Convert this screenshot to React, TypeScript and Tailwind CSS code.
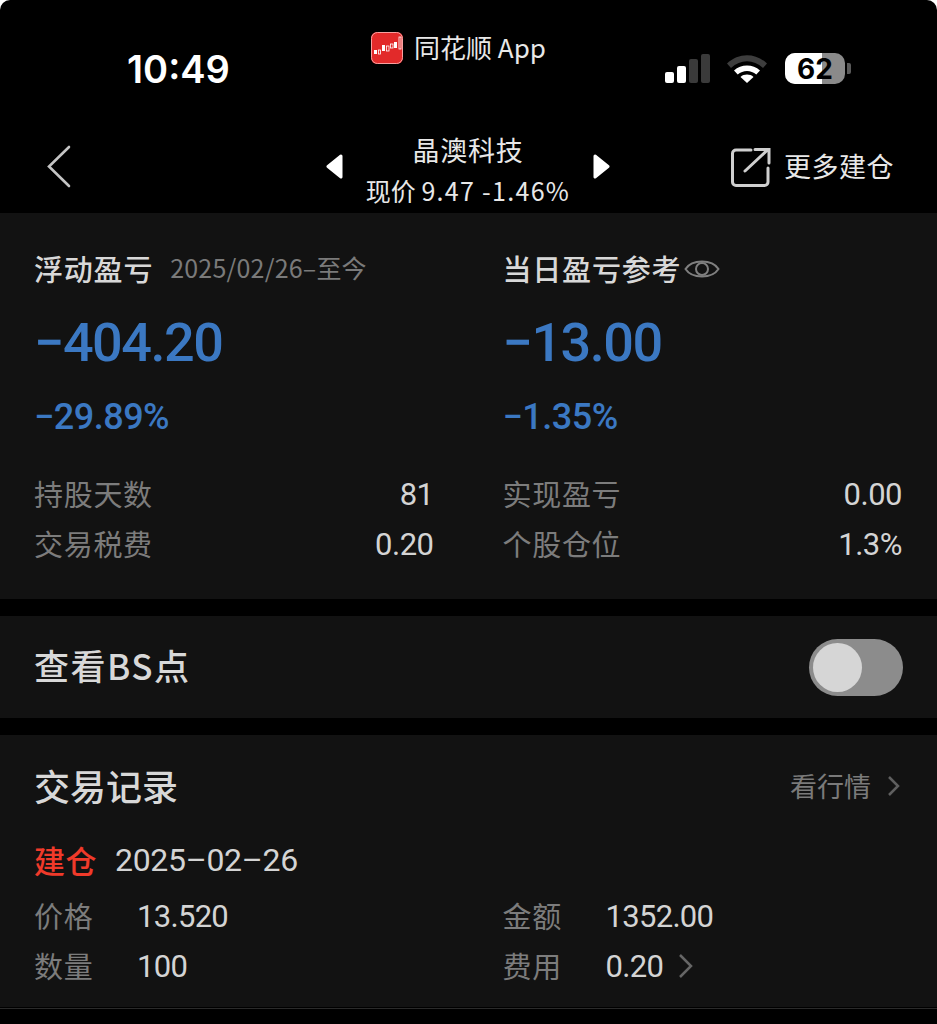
const cjk = "font-['Noto_Sans_CJK_SC',sans-serif]";
const num = "font-['Roboto','Noto_Sans_CJK_SC',sans-serif]";

function AppBadge() {
  return (
    <svg width="32" height="32" viewBox="0 0 32 32">
      <rect width="32" height="32" rx="6" fill="#e22a2a" />
      <rect x="0.5" y="0.5" width="31" height="31" rx="6" fill="none" stroke="#f8a0a0" strokeWidth="1" />
      <g fill="#fff">
        <rect x="3" y="18" width="3" height="4" />
        <rect x="11" y="13" width="3" height="6" />
        <rect x="23" y="10" width="3" height="6" />
      </g>
      <g fill="none" stroke="#fff" strokeWidth="0.8">
        <rect x="7.500" y="18" width="2" height="4" />
        <rect x="15.500" y="14" width="2.500" height="5" />
        <rect x="19.500" y="12" width="2.500" height="4" />
        <rect x="28" y="5" width="2" height="12" />
      </g>
    </svg>
  );
}

function SignalBars() {
  return (
    <div className="flex items-end gap-[3px] h-[30px]">
      <div className="w-[9px] h-[11px] rounded-[2px] bg-white" />
      <div className="w-[9px] h-[17px] rounded-[2px] bg-white" />
      <div className="w-[9px] h-[24px] rounded-[2px] bg-[#3a3a3a]" />
      <div className="w-[9px] h-[29px] rounded-[2px] bg-[#3a3a3a]" />
    </div>
  );
}

function Wifi() {
  return (
    <svg width="42" height="30" viewBox="0 0 42 30">
      <path d="M1 10.5C12.5 -0.5 29.5 -0.5 41 10.5L37 15C27.5 6 14.5 6 5 15Z" fill="#3d3d3d" />
      <path d="M8 17.5C15 10.8 27 10.8 34 17.5L30.3 21.5C25 16.7 17 16.7 11.7 21.5Z" fill="#fff" />
      <path d="M14.5 24C18 20.8 24 20.8 27.5 24L21 30Z" fill="#fff" />
    </svg>
  );
}

function Battery() {
  return (
    <div className="flex items-center gap-[2px]">
      <div className="relative w-[60px] h-[31px] rounded-[10px] bg-[#8a8a8a]">
        <div className="h-full w-[37px] rounded-l-[10px] bg-white" />
        <span className="absolute inset-0 flex items-center justify-center font-['Inter',sans-serif] text-[28px] font-bold leading-none text-black">
          62
        </span>
      </div>
      <div className="w-[4px] h-[11px] rounded-r-[2px] bg-[#5a5a5a]" />
    </div>
  );
}

function ShareIcon() {
  return (
    <svg width="40" height="40" viewBox="0 0 40 40" fill="none" stroke="#cfcfcf" strokeWidth="3" strokeLinecap="round">
      <path d="M20 3H5A3.5 3.5 0 0 0 1.5 6.5V35A3.5 3.5 0 0 0 5 38.500H33.500A3.500 3.500 0 0 0 37 35V21" />
      <path d="M14 24L37 2.500M24 2.500H38V16" />
    </svg>
  );
}

function Arrow({ dir }: { dir: "left" | "right" }) {
  return (
    <svg width="17" height="25" viewBox="0 0 17 25">
      <path
        d={dir === "left" ? "M15 2L2 12.500L15 23Z" : "M2 2L15 12.500L2 23Z"}
        fill="#fff"
        stroke="#fff"
        strokeWidth="3"
        strokeLinejoin="round"
      />
    </svg>
  );
}

function Stat({ label, value }: { label: string; value: string }) {
  return (
    <div className="flex items-center justify-between h-[50px]">
      <span className={`${cjk} text-[29px] tracking-[0.7px] text-[#7c7c7c]`}>{label}</span>
      <span className={`${num} text-[31px] text-[#d4d4d4] tracking-[-0.5px] translate-y-[1px]`}>{value}</span>
    </div>
  );
}

function TradeField({ label, value, more }: { label: string; value: string; more?: boolean }) {
  return (
    <div className="flex items-center h-[50px]">
      <span className={`${cjk} w-[103px] text-[29px] tracking-[0.7px] text-[#7c7c7c]`}>{label}</span>
      <span className={`${num} text-[31px] text-[#d4d4d4] tracking-[-0.7px] translate-y-[1px]`}>{value}</span>
      {more && (
        <svg className="ml-[15px]" width="16" height="26" viewBox="0 0 16 26" fill="none" stroke="#666" strokeWidth="2.5">
          <path d="M2 2L13 13L2 24" />
        </svg>
      )}
    </div>
  );
}

function Summary({
  title,
  note,
  eye,
  amount,
  percent,
  stats,
}: {
  title: string;
  note?: string;
  eye?: boolean;
  amount: string;
  percent: string;
  stats: [string, string][];
}) {
  return (
    <div>
      <div className="flex items-center h-[40px]">
        <span className={`${cjk} text-[29px] font-medium tracking-[0.8px] text-[#d8d8d8]`}>{title}</span>
        {note && <span className={`${cjk} ml-[17px] text-[25px] tracking-[0.2px] text-[#7a7a7a] -translate-y-[1px]`}>{note}</span>}
        {eye && (
          <svg className="ml-[3px]" width="36" height="26" viewBox="0 0 36 26" fill="none" stroke="#7f7f7f" strokeWidth="2">
            <path d="M1.500 13C8 3 28 3 34.500 13C28 23 8 23 1.500 13Z" />
            <circle cx="18" cy="13" r="6" />
          </svg>
        )}
      </div>
      <div className={`${num} mt-[22px] text-[54px] font-medium leading-[64px] tracking-[-1.500px] text-[#3b78c2]`}>
        {amount}
      </div>
      <div className={`${num} mt-[20px] text-[36px] font-medium leading-[44px] tracking-[-0.5px] text-[#3b78c2]`}>
        {percent}
      </div>
      <div className="mt-[30px]">
        {stats.map(([label, value]) => (
          <Stat key={label} label={label} value={value} />
        ))}
      </div>
    </div>
  );
}

export default function App() {
  return (
    <div className="w-[937px] h-[1024px] overflow-hidden bg-white">
      <div className="h-full bg-black rounded-t-[10px] overflow-hidden">
        {/* Status bar */}
        <header className="flex h-[120px] text-white">
          <div className="w-[358px] pl-[127px] pt-[42px] font-['Inter',sans-serif] text-[38px] font-semibold leading-[54px]">
            10:49
          </div>
          <div className="flex items-start gap-[11px] pt-[32px] pl-[13px] w-[307px]">
            <AppBadge />
            <span className={`${cjk} text-[26px] leading-[30px] text-[#e8e8e8]`}>同花顺 App</span>
          </div>
          <div className="flex items-start pt-[53px]">
            <SignalBars />
            <div className="ml-[16px]">
              <Wifi />
            </div>
            <div className="ml-[17px]">
              <Battery />
            </div>
          </div>
        </header>

        {/* Navigation */}
        <nav className="flex items-center h-[93px] text-white">
          <svg className="ml-[47px]" width="25" height="43" viewBox="0 0 25 43" fill="none" stroke="#c4c4c4" strokeWidth="2.600" strokeLinecap="round">
            <path d="M22 2L2 21.500L22 41" />
          </svg>
          <div className="ml-[254px] flex items-center">
            <Arrow dir="left" />
            <div className="w-[250px] text-center">
              <div className={`${cjk} text-[27px] leading-[46px] tracking-[0.7px] text-[#e8e8e8]`}>晶澳科技</div>
              <div className={`${cjk} text-[25px] leading-[34px] text-[#e8e8e8]`}>
                现价 <span className="tracking-[1.300px]">9.47 -1.46%</span>
              </div>
            </div>
            <Arrow dir="right" />
          </div>
          <div className="ml-[121px]">
            <ShareIcon />
          </div>
          <span className={`${cjk} ml-[13px] text-[27px] tracking-[0.5px] text-[#e8e8e8]`}>更多建仓</span>
        </nav>

        <main className="flex flex-col gap-[17px]">
          {/* Profit summary */}
          <section className="h-[386px] bg-[#121212] pl-[34px] pr-[35px] pt-[36px] grid grid-cols-2 gap-x-[69px]">
            <Summary
              title="浮动盈亏"
              note="2025/02/26–至今"
              amount="−404.20"
              percent="−29.89%"
              stats={[
                ["持股天数", "81"],
                ["交易税费", "0.20"],
              ]}
            />
            <Summary
              title="当日盈亏参考"
              eye
              amount="−13.00"
              percent="−1.35%"
              stats={[
                ["实现盈亏", "0.00"],
                ["个股仓位", "1.3%"],
              ]}
            />
          </section>

          {/* BS point toggle */}
          <section className="h-[102px] bg-[#121212] pl-[34px] pr-[34px] flex items-center justify-between">
            <span className={`${cjk} text-[35px] font-medium tracking-[1.500px] text-[#d8d8d8] -translate-y-[2px]`}>查看BS点</span>
            <div className="w-[94px] h-[57px] rounded-full bg-[#8c8c8c] pl-[4px] flex items-center">
              <div className="w-[49px] h-[49px] rounded-full bg-[#d6d6d6]" />
            </div>
          </section>

          {/* Trade records */}
          <section className="h-[272px] bg-[#121212] pl-[34px] pr-[35px]">
            <div className="flex items-center justify-between h-[100px]">
              <span className={`${cjk} text-[36px] font-medium text-[#d8d8d8]`}>交易记录</span>
              <div className="flex items-center gap-[16px] pr-[2px] translate-y-[1px]">
                <span className={`${cjk} text-[27px] text-[#7a7a7a]`}>看行情</span>
                <svg width="13" height="22" viewBox="0 0 13 22" fill="none" stroke="#5f5f5f" strokeWidth="2.500">
                  <path d="M2 2L11 11L2 20" />
                </svg>
              </div>
            </div>
            <div className="flex items-center h-[48px] pt-[2px]">
              <span className={`${cjk} text-[31px] font-medium tracking-[0.5px] text-[#f03a2a]`}>建仓</span>
              <span className={`${num} ml-[18px] text-[32px] tracking-[-0.3px] text-[#d4d4d4]`}>2025–02–26</span>
            </div>
            <div className="grid grid-cols-2 gap-x-[69px] mt-[8px]">
              <TradeField label="价格" value="13.520" />
              <TradeField label="金额" value="1352.00" />
              <TradeField label="数量" value="100" />
              <TradeField label="费用" value="0.20" more />
            </div>
          </section>
        </main>
        <div className="h-[1px] mt-[1px] bg-[#2a2a2a]" />
      </div>
    </div>
  );
}
